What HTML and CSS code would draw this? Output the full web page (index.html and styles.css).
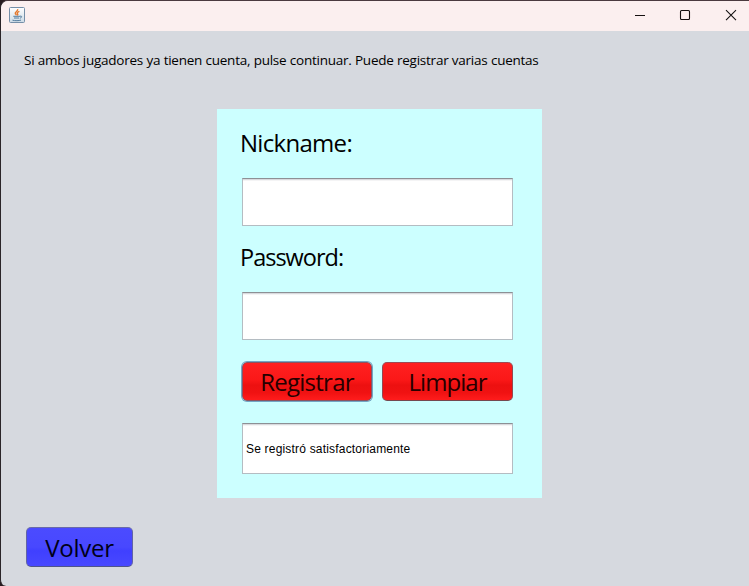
FILE: index.html
```html
<!DOCTYPE html>
<html lang="es">
<head>
<meta charset="utf-8">
<title>Registro</title>
<link rel="stylesheet" href="styles.css">
</head>
<body>
<div class="window">
  <header class="titlebar">
    <svg class="app-icon" width="16" height="16" viewBox="0 0 16 16">
      <defs><linearGradient id="tile" x2="0" y2="1"><stop offset="0" stop-color="#ffffff"/><stop offset="1" stop-color="#cddbe6"/></linearGradient></defs>
      <rect x=".5" y=".5" width="15" height="15" rx="1" fill="url(#tile)" stroke="#758fa8"/>
      <path d="M8.600 2.200C9.600 4 5.600 4.800 6.300 6.500c.2.700.9 1 1.100 1.700M10.400 4.300C8.300 5.200 7.700 6 8.700 7.200c.3.500 0 .9-.4 1.200" fill="none" stroke="#e5792e" stroke-width="1.400"/>
      <path d="M4.300 9.300h6.700M5 11h5M3.500 13.200c2.500.7 6.500.6 8.500-.1M11 9.200c2.300-.6 2.200 1.500-.2 2" fill="none" stroke="#557d9f" stroke-width="1"/>
    </svg>
    <div class="controls">
      <svg width="46" height="30" viewBox="0 0 46 30"><path d="M14 14.500h10"/></svg>
      <svg width="46" height="30" viewBox="0 0 46 30"><rect x="13.500" y="9.500" width="9" height="9" rx="1"/></svg>
      <svg width="46" height="30" viewBox="0 0 46 30"><path d="M13 9.200l10 10M23 9.200l-10 10"/></svg>
    </div>
  </header>
  <main class="content">
    <p class="hint">Si ambos jugadores ya tienen cuenta, pulse continuar. Puede registrar varias cuentas</p>
    <form class="panel">
      <label class="label nick" for="nick">Nickname:</label>
      <input class="field" id="nick" type="text">
      <label class="label pass" for="pass">Password:</label>
      <input class="field" id="pass" type="password">
      <div class="actions">
        <button class="btn red focused" type="button"><span class="registrar">Registrar</span></button>
        <button class="btn red" type="button"><span class="limpiar">Limpiar</span></button>
      </div>
      <output class="field message"><span>Se registró satisfactoriamente</span></output>
    </form>
    <button class="btn blue" type="button"><span class="volver">Volver</span></button>
  </main>
</div>
</body>
</html>
```

FILE: styles.css
```css
* { box-sizing: border-box; }
body { margin: 0; background: #281c20; overflow: hidden; font-family: "Open Sans", "Noto Sans", sans-serif; color: #000; }
.window {
  width: 749px; height: 586px; background: #d6d9df; overflow: hidden;
  border-top: 1px solid #4a3a3f; border-left: 1px solid #2a2428;
  border-radius: 8px 0 0 6px; display: flex; flex-direction: column;
}
.titlebar { height: 30px; flex: none; background: #fbefef; display: flex; justify-content: space-between; padding-left: 8px; }
.app-icon { margin-top: 6px; }
.controls { display: flex; margin-right: -10px; }
.controls svg { flex: none; fill: none; stroke: #151111; stroke-width: 1.100; }
.content { flex: 1; display: flex; flex-direction: column; align-items: flex-start; }
.hint { margin: 19px 0 0 23px; height: 21px; line-height: 20px; font-size: 13.500px; letter-spacing: -0.250px; word-spacing: 0.200px; white-space: nowrap; }
.panel { margin: 38px 0 0 216px; width: 325px; height: 389px; padding: 16px 29px 0 25px; background: #ccffff; display: flex; flex-direction: column; }
.label { height: 36px; line-height: 36px; font-size: 24px; margin-left: -2px; }
.field {
  display: block; flex: none; width: 271px; height: 48px; padding: 0 3px; outline: none; border-radius: 0;
  background: #fff; border: 1px solid #b4bcc2; border-top-color: #8d9095; box-shadow: inset 0 1px #d9dade, inset 0 2px #f4f4f5;
}
.nick, .pass { margin-bottom: 17px; }
.nick { letter-spacing: -0.700px; }
.pass { margin-top: 13px; font-size: 23.500px; letter-spacing: -1px; }
.actions { display: flex; justify-content: space-between; width: 271px; margin-top: 22px; }
.btn {
  height: 39px; padding: 0; border: 1px solid; border-radius: 5px; display: flex; justify-content: center; align-items: center;
  font: 24px/36px "Open Sans", "Noto Sans", sans-serif; color: #260000; white-space: nowrap;
}
.btn span { position: relative; top: 1px; }
.red { width: 131px; border-color: #a04852 #944850 #74484f; background: linear-gradient(#ff2020, #fb1818 45%, #ed1010 60%, #f01212 80%, #ff1c1c); }
.focused { width: 130px; border-color: #8a5361; box-shadow: 0 0 0 1px #72a5c4; }
.blue { width: 107px; height: 40px; margin: 29px 0 0 25px; border-color: #696ba8 #6264a4 #505589; color: #000018; background: linear-gradient(#4b4bff, #4848ff 50%, #4040ff 60%, #4848ff); }
.registrar { letter-spacing: -0.750px; }
.limpiar { letter-spacing: -0.950px; }
.registrar, .limpiar { top: 0 !important; }
.volver { letter-spacing: -0.300px; }
.message { display: flex; align-items: center; height: 51px; margin-top: 22px; font: 12px "Liberation Sans", Arial, sans-serif; letter-spacing: 0.190px; }
```
